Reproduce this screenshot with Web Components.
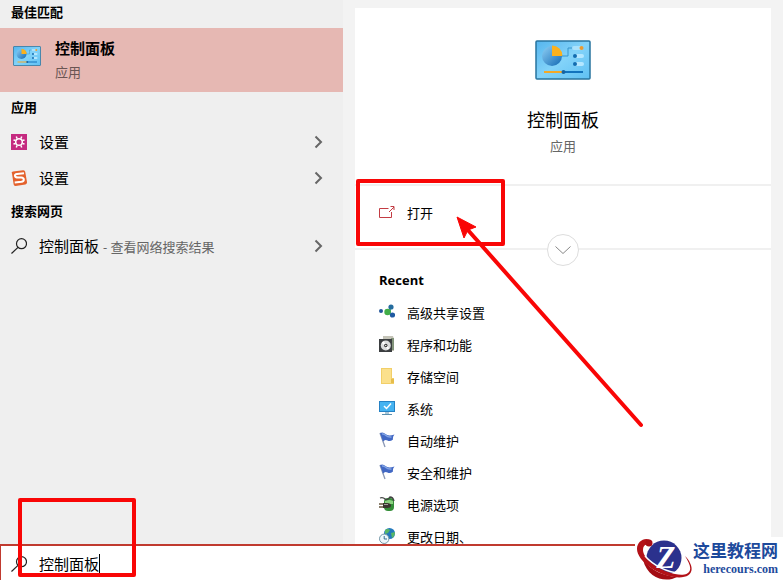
<!DOCTYPE html>
<html lang="zh-CN">
<head>
<meta charset="utf-8">
<meta name="viewport" content="width=device-width, initial-scale=1">
<title>控制面板</title>
<style>
body {
  margin: 0;
  font-family: "Open Sans", "Noto Sans CJK SC", sans-serif;
  font-size: 15px;
  color: #000;
}
</style>
</head>
<body>
<search-window>
  <section-heading slot="results" class="first">最佳匹配</section-heading>
  <best-match slot="results" icon="panel">控制面板<span slot="kind">应用</span></best-match>
  <section-heading slot="results">应用</section-heading>
  <result-row slot="results" icon="gear">设置</result-row>
  <result-row slot="results" icon="sogou">设置</result-row>
  <section-heading slot="results">搜索网页</section-heading>
  <result-row slot="results" icon="search">控制面板 <span slot="note">- 查看网络搜索结果</span></result-row>

  <app-hero slot="detail" icon="panel">控制面板<span slot="kind">应用</span></app-hero>
  <app-actions slot="detail"><action-item icon="open">打开</action-item></app-actions>
  <recent-list slot="detail" heading="Recent">
    <action-item icon="share">高级共享设置</action-item>
    <action-item icon="programs">程序和功能</action-item>
    <action-item icon="folder">存储空间</action-item>
    <action-item icon="system">系统</action-item>
    <action-item icon="flag">自动维护</action-item>
    <action-item icon="flag">安全和维护</action-item>
    <action-item icon="power">电源选项</action-item>
    <action-item icon="clock">更改日期、</action-item>
  </recent-list>

  <search-box slot="search" value="控制面板"></search-box>
</search-window>
<site-mark></site-mark>
<mark-up></mark-up>

<script>
const icons = {
  panel: `<svg viewBox="0 0 56 40">
    <defs>
      <linearGradient id="bg" x1="0" y1="0" x2="1" y2="1"><stop offset="0" stop-color="#55b5ee"/><stop offset=".5" stop-color="#83d3f9"/><stop offset="1" stop-color="#5fc0f3"/></linearGradient>
      <linearGradient id="pie" x1="0" y1="0" x2="1" y2="1"><stop offset="0" stop-color="#8fd0f5"/><stop offset="1" stop-color="#1269b4"/></linearGradient>
    </defs>
    <rect x="1" y="1" width="54" height="38" rx="1" fill="url(#bg)" stroke="#28749f" stroke-width="1.500"/>
    <circle cx="17" cy="16" r="10" fill="url(#pie)"/>
    <path d="M17 16V5.500a10.500 10.500 0 0 1 10.500 10.500z" fill="#fbb11c"/>
    <path d="M27 16h6V8h5" fill="none" stroke="#3795cd"/>
    <rect x="37" y="6" width="11" height="4" rx="2" fill="#aae2fc"/><circle cx="46.500" cy="8" r="2" fill="#e99a31"/>
    <rect x="39" y="14" width="10" height="4" rx="2" fill="#b5e7ff"/><circle cx="40" cy="16" r="2" fill="#126cb0"/>
    <rect x="39" y="22" width="10" height="4" rx="2" fill="#b5e7ff"/><circle cx="40" cy="24" r="2" fill="#126cb0"/>
    <path d="M9 32h19" stroke="#f3a928" stroke-width="2"/><path d="M29 32h19" stroke="#1273bd" stroke-width="2"/>
    <circle cx="28.500" cy="32" r="2" fill="#1764a2"/>
  </svg>`,
  gear: `<svg viewBox="0 0 16 16">
    <rect width="16" height="16" fill="#c52a80"/>
    <circle cx="8" cy="8" r="3.300" fill="none" stroke="#fff" stroke-width="1.500"/>
    <path d="M6 4.500 5.300 2.500M10 4.500l.7-2M6 11.500l-.7 2M10 11.500l.7 2M4.500 6.500l-2-.5M4.500 9.500l-2 .5M11.500 6.500l2-.5M11.500 9.500l2 .5" stroke="#fff" stroke-width="1.500"/>
  </svg>`,
  sogou: `<svg viewBox="0 0 16 16">
    <path d="M1 3.500Q0 2 2 1.600L12 .2q2-.2 2.200 1.600L16 12q.2 2-1.600 2.400l-9.800 1.500q-1.800.1-2-1.600z" fill="#e4622d"/>
    <path d="M13 3.300 6 4Q3.500 4.300 4 6q.3 1.500 3 1.500l3 .1q2.800.2 2.800 2.100 0 1.700-2.500 2.100l-6.600.8" fill="none" stroke="#fff" stroke-width="2"/>
  </svg>`,
  search: `<svg viewBox="0 0 16 16" fill="none" stroke="#222" stroke-width="1.200">
    <circle cx="10.500" cy="5.700" r="5"/><path d="M7 9.400.5 15.500"/>
  </svg>`,
  open: `<svg viewBox="0 0 16 16" fill="none" stroke="#c33c43">
    <path d="M9.500 4.500h-9v9h12V8"/><path d="m10 8 5-5M11.500 2.500h3.500V6"/>
  </svg>`,
  share: `<svg viewBox="0 0 16 16">
    <path d="m8 8 4-5v9z" fill="#54ad83"/>
    <circle cx="2" cy="7" r="2" fill="#23569b"/><circle cx="12" cy="3" r="2.600" fill="#246c9e"/>
    <circle cx="8.500" cy="8" r="3.200" fill="#42ad49"/><circle cx="13.500" cy="11" r="2.600" fill="#205aa2"/>
  </svg>`,
  programs: `<svg viewBox="0 0 16 16">
    <path d="M4 0h10l1 3v12H4z" fill="#c5c4b8"/><path d="M12 2h3v12h-3z" fill="#82937a"/>
    <rect y="3" width="13" height="13" fill="#3b3e40"/>
    <circle cx="6.800" cy="9.500" r="5" fill="#dcdddd"/><path d="m3.500 6 3.300 3.500L9.500 13" stroke="#fff" stroke-width="2"/>
    <circle cx="6.800" cy="9.500" r="1.700" fill="#333"/><circle cx="6.800" cy="9.500" r=".7" fill="#fff"/>
  </svg>`,
  folder: `<svg viewBox="0 0 16 16">
    <path d="M2 0h11v10h2v6H2z" fill="#f2cf68"/><path d="M3 1h9v14H3z" fill="#fbe08c"/><path d="M12 11h3v4h-3z" fill="#e6bd4c"/>
  </svg>`,
  system: `<svg viewBox="0 0 16 16">
    <rect y="1" width="16" height="11" fill="#2582c5"/><rect x="1" y="2" width="14" height="9" fill="#45b3f1"/>
    <path d="m5 6 2.500 2.500L12 3.500" fill="none" stroke="#fff" stroke-width="1.500"/>
    <path d="M6 12h4v2H6z" fill="#abc7d8"/><path d="M3 14.500h10" stroke="#5c90ae"/>
  </svg>`,
  flag: `<svg viewBox="0 0 16 16">
    <path d="m1 1 5 14" stroke="#8b99b5" stroke-width="1.300"/>
    <path d="M1 1q3-1.500 5.500 1t9 .500q-2 2-1.500 5-3 2.500-5.500 1T4 9.500z" fill="#4268c4"/>
    <path d="M3 2q2-.5 4 1.500t5.500 1.500" fill="none" stroke="#83a4e4" stroke-width="1.500"/>
  </svg>`,
  power: `<svg viewBox="0 0 16 16">
    <rect x="5" y="2" width="10" height="13" rx="4" fill="#348e38"/><path d="M6 5q4-2 8 0v3H6z" fill="#8bd180"/>
    <path d="M1 2q3-1 5 1t5-2q3 0 4 4" fill="none" stroke="#444" stroke-width="1.300"/>
    <path d="M4 7h4q4 0 4 2.500T8 12H4z" fill="#39352f"/><path d="M0 8h4M0 11h4" stroke="#65563c" stroke-width="1.500"/>
    <path d="M5 8.500h4" stroke="#a0a09b"/>
  </svg>`,
  clock: `<svg viewBox="0 0 16 16">
    <circle cx="10.500" cy="5.500" r="5.500" fill="#2379bd"/>
    <path d="M6 2q3-2 5 0l-2 3-3 1zM12 5l4-1q0 4-3 6z" fill="#58b766"/>
    <circle cx="5.200" cy="10.800" r="4.700" fill="#edf7fb" stroke="#7497a8"/>
    <path d="M5.200 8v3H8" fill="none" stroke="#356e8f"/>
  </svg>`,
  next: `<svg viewBox="0 0 16 16" fill="none" stroke="#666" stroke-width="2"><path d="m4.500 2.500 5.500 5.500-5.500 5.500"/></svg>`,
  down: `<svg viewBox="0 0 16 16" fill="none" stroke="#888"><path d="m.5 4.500 7.500 7 7.500-7"/></svg>`
};

function define(name, render) {
  customElements.define(name, class extends HTMLElement {
    constructor() {
      super();
      this.attachShadow({ mode: 'open' });
    }
    connectedCallback() {
      const template = document.createElement('template');
      template.innerHTML = render(this);
      this.shadowRoot.replaceChildren(template.content.cloneNode(true));
    }
  });
}

define('app-icon', (el) => `<style>
:host { display: block; flex: none; width: 16px; }
svg { display: block; width: 100%; }
</style>${icons[el.getAttribute('name')]}`);

define('search-window', () => `<style>
:host { display: flex; flex-direction: column; height: 100vh; overflow: hidden; }
main { flex: 1; min-height: 0; display: flex; }
.results { flex: none; width: 343px; background: #efefef; overflow: hidden; }
.detail { flex: 1; min-width: 0; padding: 8px 12px 0; background: #f3f3f3; overflow: hidden; }
.card { background: #fff; min-height: 100%; }
</style>
<main>
  <div class="results"><slot name="results"></slot></div>
  <div class="detail"><div class="card"><slot name="detail"></slot></div></div>
</main>
<slot name="search"></slot>`);

define('section-heading', () => `<style>
:host { display: block; padding: 3px 11px 5px; font-size: 13px; line-height: 24px; font-weight: bold; }
:host(.first) { padding: 0 11px 4px; }
h2 { margin: 0; font: inherit; }
</style><h2><slot></slot></h2>`);

define('best-match', (el) => `<style>
:host { display: block; }
button {
  display: flex; gap: 14px; width: 100%; height: 64px; padding: 8px 13px;
  border: 0; background: #e6b8b3; font: inherit; color: inherit; text-align: left;
}
app-icon { width: 28px; margin-top: 10px; }
b, small { display: block; line-height: 24px; }
small { font-size: 13px; color: #6a5553; }
</style>
<button type="button">
  <app-icon name="${el.getAttribute('icon')}"></app-icon>
  <span><b><slot></slot></b><small><slot name="kind"></slot></small></span>
</button>`);

define('result-row', (el) => `<style>
:host { display: block; }
button {
  display: flex; align-items: center; gap: 12px; width: 100%; height: 36px; padding: 0 16px 0 11px;
  border: 0; background: none; font: inherit; color: inherit; text-align: left;
}
.label { flex: 1; white-space: pre; padding-bottom: 2px; }
.note { font-size: 13px; color: #666; }
</style>
<button type="button">
  <app-icon name="${el.getAttribute('icon')}"></app-icon>
  <span class="label"><slot></slot><span class="note"><slot name="note"></slot></span></span>
  <app-icon name="next"></app-icon>
</button>`);

define('app-hero', (el) => `<style>
:host {
  display: flex; flex-direction: column; align-items: center; box-sizing: border-box;
  height: 176px; padding-top: 32px;
}
app-icon { width: 56px; }
h1 { margin: 26px 0 0; font-size: 18px; line-height: 28px; font-weight: normal; }
p { margin: 0; font-size: 13px; line-height: 24px; color: #666; }
</style>
<app-icon name="${el.getAttribute('icon')}"></app-icon>
<h1><slot></slot></h1>
<p><slot name="kind"></slot></p>`);

define('app-actions', () => `<style>
:host {
  display: block; position: relative; height: 50px; padding-top: 12px;
  border: solid #f0f0f0; border-width: 2px 0;
}
button {
  position: absolute; left: 50%; bottom: -18px; transform: translateX(-50%);
  width: 32px; height: 32px; padding: 0 7px;
  border: 1px solid #ddd; border-radius: 50%; background: #fff;
}
</style>
<slot></slot>
<button type="button" aria-label="展开"><app-icon name="down"></app-icon></button>`);

define('recent-list', (el) => `<style>
:host { display: block; padding-top: 16px; }
h2 { margin: 0; padding: 0 24px 4px; font-size: 13px; line-height: 28px; font-weight: bold; }
</style>
<h2>${el.getAttribute('heading')}</h2>
<slot></slot>`);

define('action-item', (el) => `<style>
:host { display: block; }
button {
  display: flex; align-items: center; gap: 12px; width: 100%; height: 32px; padding: 0 24px;
  border: 0; background: none; font: inherit; font-size: 13px; color: inherit; text-align: left;
}
app-icon { margin-bottom: 4px; }
span { padding-bottom: 3px; }
</style>
<button type="button"><app-icon name="${el.getAttribute('icon')}"></app-icon><span><slot></slot></span></button>`);

define('search-box', (el) => `<style>
:host {
  display: flex; align-items: center; flex: none; box-sizing: border-box;
  height: 36px; padding: 2px 11px 0 10px; background: #fff;
  border: solid #c03a2f; border-width: 2px 0 0 1px;
}
label { margin-right: 12px; }
input { width: 4em; padding: 0 0 2px; border: 0; outline: 0; background: none; font: inherit; color: inherit; }
.caret { width: 1px; height: 21px; background: #000; }
</style>
<label for="q" aria-label="搜索"><app-icon name="search"></app-icon></label>
<input id="q" type="text" value="${el.getAttribute('value')}">
<span class="caret"></span>`);

// watermark in the bottom right corner
define('site-mark', () => `<style>
:host { position: absolute; right: 0; bottom: 0; background: #fff; }
a { display: flex; height: 43px; padding-right: 5px; color: #1d4a9c; text-decoration: none; }
svg { width: 58px; height: 43px; }
.name { display: flex; flex-direction: column; align-items: flex-end; }
.cn { font: bold 17px/25px "Noto Sans CJK SC", sans-serif; }
.en { font: bold 12px/14px "Liberation Serif", serif; }
</style>
<a href="#">
  <svg viewBox="0 0 58 43">
    <path d="M10 24c3 12 17 22 32 16-11 0-22-5-32-16z" fill="#a30d14"/>
    <circle cx="29" cy="21" r="17.500" fill="#2b318d"/>
    <path d="M7 18c6 10 25 24 40 21l-5 4C26 42 10 34 5 22z" fill="#fff"/>
    <path d="M8 23c8 10 20 16 34 17-11 6-29 2-34-17z" fill="#a30d14"/>
    <path d="M15 3C9 0 2 5 2 12c0 12 21 26 37 28 14 2 21-4 16-14-1-3-3-5-5-7 3 5 6 10 5 14-2 6-11 6-22 2C21 31 8 21 8 13c0-4 2-6 5-5z" fill="#b31218"/>
    <circle cx="14" cy="6" r="3.500" fill="#a90f16"/>
    <path d="M10 19c8 9 22 17 36 17" fill="none" stroke="#fff" stroke-width="1.500"/>
    <text x="31" y="31" text-anchor="middle" font-family="Liberation Serif, serif" font-weight="bold" font-style="italic" font-size="31" fill="#fff">Z</text>
  </svg>
  <span class="name"><span class="cn">这里教程网</span><span class="en">herecours.com</span></span>
</a>`);

// red boxes and arrow drawn over the window
define('mark-up', () => `<style>
:host { position: absolute; left: 0; top: 0; pointer-events: none; }
svg { display: block; overflow: visible; }
</style>
<svg width="1" height="1" fill="none" stroke="#f90606" stroke-width="4" stroke-linejoin="round">
  <rect x="358" y="181" width="145" height="63"/>
  <rect x="20" y="500" width="114" height="75"/>
  <path d="m467 229 174 196" stroke-linecap="round"/>
  <path d="m457 217 19 10-8 3-4 8z" fill="#f90606" stroke="#f90606" stroke-width="1"/>
</svg>`);
</script>
</body>
</html>
